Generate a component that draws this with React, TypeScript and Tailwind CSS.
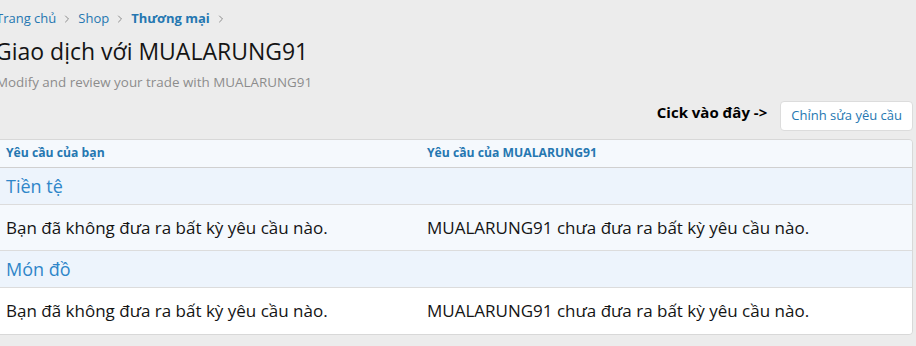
import { ChevronRight } from 'lucide-react'

const font = { fontFamily: '"Open Sans", "Noto Sans", sans-serif' }

function Crumbs() {
  const items = [
    { label: 'Trang chủ', bold: false },
    { label: 'Shop', bold: false },
    { label: 'Thương mại', bold: true },
  ]
  return (
    <div className="flex items-center h-[38px] text-[13px] text-[#2577b1]">
      {items.map((it) => (
        <span key={it.label} className="flex items-center">
          <span className={it.bold ? 'font-bold' : ''}>{it.label}</span>
          <ChevronRight className="w-[12px] h-[12px] mx-[5px] text-[#8c8c8c]" strokeWidth={2} />
        </span>
      ))}
    </div>
  )
}

function SectionRow({ title }: { title: string }) {
  return (
    <div className="h-[37px] flex items-center px-[9px] bg-[#edf4fc] border-b border-[#dcdcdc] text-[18px] text-[#2f86c9]">
      {title}
    </div>
  )
}

function DataRow({ white }: { white?: boolean }) {
  return (
    <div
      className={
        'grid grid-cols-[421px_1fr] h-[46px] items-center px-[9px] text-[17px] text-[#141414] ' +
        (white ? 'bg-white' : 'bg-[#f5f9fd] border-b border-[#dcdcdc]')
      }
    >
      <span>Bạn đã không đưa ra bất kỳ yêu cầu nào.</span>
      <span>MUALARUNG91 chưa đưa ra bất kỳ yêu cầu nào.</span>
    </div>
  )
}

export default function App() {
  return (
    <div className="h-[346px] overflow-hidden bg-[#ececec]" style={font}>
      <div className="ml-[-4px] mr-[3px]">
        <Crumbs />
        <h1 className="text-[23px] leading-[26px] text-[#141414] ml-[-1px]">Giao dịch với MUALARUNG91</h1>
        <p className="mt-[9px] text-[13.4px] leading-[18px] text-[#8c8c8c]">Modify and review your trade with MUALARUNG91</p>
        <div className="mt-[10px] flex items-center justify-end gap-[13px]">
          <span className="text-[15px] font-bold text-black mb-[7px]">Cick vào đây -&gt;</span>
          <button className="h-[30px] px-[10px] bg-white border border-[#dcdcdc] rounded-[4px] text-[13px] text-[#2577b1]">
            Chỉnh sửa yêu cầu
          </button>
        </div>
        <div className="mt-[8px] border border-[#d8d8d8] rounded-[4px] overflow-hidden">
          <div className="grid grid-cols-[421px_1fr] h-[28px] items-center px-[9px] bg-[#f5f9fd] border-b border-[#d0d0d0] text-[12.2px] font-bold text-[#2577b1]">
            <span>Yêu cầu của bạn</span>
            <span>Yêu cầu của MUALARUNG91</span>
          </div>
          <SectionRow title="Tiền tệ" />
          <DataRow />
          <SectionRow title="Món đồ" />
          <DataRow white />
        </div>
      </div>
    </div>
  )
}
